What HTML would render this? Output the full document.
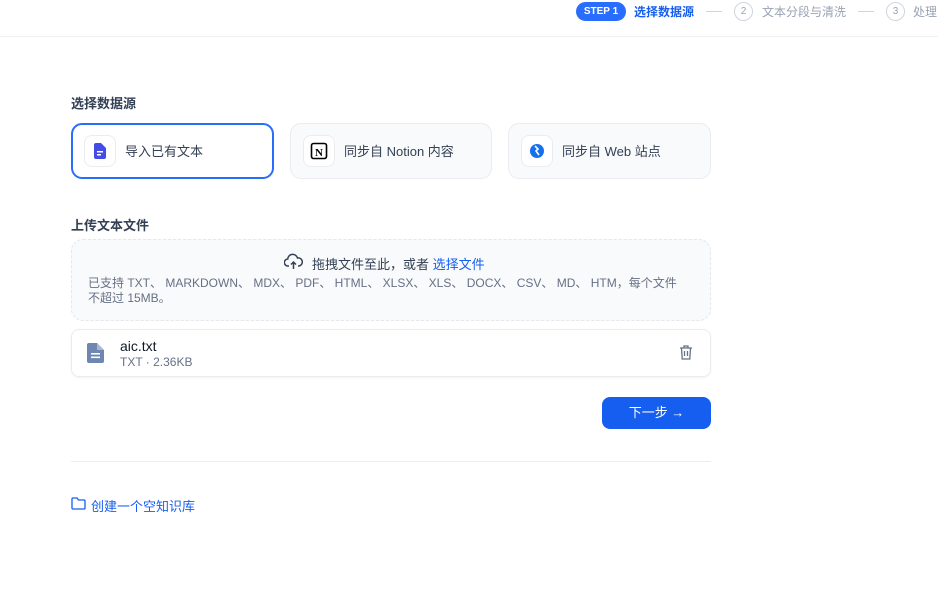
<!DOCTYPE html>
<html><head><meta charset="utf-8"><style>
*{box-sizing:border-box;margin:0;padding:0}
body{width:938px;height:596px;background:#fff;font-family:"Liberation Sans","Noto Sans CJK SC",sans-serif;position:relative;overflow:hidden;color:#354052}
.abs{position:absolute}
.top{left:0;top:0;width:938px;height:37px;border-bottom:1px solid #f0f1f3}
.card{position:absolute;top:123px;height:56px;border:1px solid #eaecf0;border-radius:11px;background:#f9fafb;font-size:13px;color:#344054}
.card .ic{position:absolute;left:12px;top:11px;width:32px;height:32px;border:1px solid #eaecf0;border-radius:8px;background:#fff;display:flex;align-items:center;justify-content:center}
.card span{position:absolute;left:53px;top:17px}
</style></head><body>
<div class="abs top"></div>
<div class="abs" style="left:576px;top:2px;width:50px;height:19px;border-radius:10px;background:#296dff;color:#fff;font-size:10px;font-weight:bold;text-align:center;line-height:19px">STEP 1</div>
<div class="abs" style="left:634px;top:3px;font-size:12px;color:#155eef;font-weight:bold">选择数据源</div>
<div class="abs" style="left:706px;top:11px;width:16px;height:1px;background:#d0d5dd"></div>
<div class="abs" style="left:734px;top:2px;width:19px;height:19px;border:1px solid #d0d5dd;border-radius:50%;font-size:10px;color:#98a2b3;text-align:center;line-height:17px">2</div>
<div class="abs" style="left:762px;top:3px;font-size:12px;color:#98a2b3">文本分段与清洗</div>
<div class="abs" style="left:858px;top:11px;width:16px;height:1px;background:#d0d5dd"></div>
<div class="abs" style="left:886px;top:2px;width:19px;height:19px;border:1px solid #d0d5dd;border-radius:50%;font-size:10px;color:#98a2b3;text-align:center;line-height:17px">3</div>
<div class="abs" style="left:913px;top:3px;font-size:12px;color:#98a2b3">处理</div>

<div class="abs" style="left:71px;top:93px;font-size:13px;font-weight:bold;color:#344054">选择数据源</div>
<div class="card" style="left:71px;width:203px;border:2px solid #296dff;background:#fff"><div class="ic" style="left:11px;top:10px"><svg width="14" height="16" viewBox="0 0 14 16"><path d="M1 2a2 2 0 0 1 2-2h5l5 5v9a2 2 0 0 1-2 2H3a2 2 0 0 1-2-2z" fill="#444ce7"/><rect x="4" y="8" width="6" height="1.5" fill="#fff"/><rect x="4" y="11" width="4" height="1.5" fill="#fff"/></svg></div><span style="left:52px;top:16px">导入已有文本</span></div>
<div class="card" style="left:290px;width:202px"><div class="ic"><svg width="18" height="18" viewBox="0 0 18 18"><rect x="1.5" y="1.5" width="15" height="15" rx="2" fill="#fff" stroke="#000" stroke-width="1.6"/><text x="9" y="14" font-size="11" font-weight="bold" text-anchor="middle" font-family="Liberation Serif">N</text></svg></div><span>同步自 Notion 内容</span></div>
<div class="card" style="left:508px;width:203px"><div class="ic"><svg width="16" height="16" viewBox="0 0 16 16"><circle cx="8" cy="8" r="7" fill="#1570ef"/><path d="M6 3l3 3-2 2 3 4" stroke="#fff" stroke-width="1.6" fill="none"/></svg></div><span>同步自 Web 站点</span></div>

<div class="abs" style="left:71px;top:215px;font-size:13px;font-weight:bold;color:#344054">上传文本文件</div>
<div class="abs" style="left:71px;top:239px;width:640px;height:82px;border:1px dashed #e4e7ec;border-radius:12px;background:#f9fafb"></div>
<svg class="abs" style="left:284px;top:253px" width="19" height="18" viewBox="0 0 19 18"><path d="M5 13H4a3.5 3.5 0 0 1-.3-7A5 5 0 0 1 13.5 5 4 4 0 0 1 15 13h-1M9.5 16V9M7 11.5l2.5-2.5 2.5 2.5" stroke="#344054" stroke-width="1.5" fill="none"/></svg>
<div class="abs" style="left:312px;top:254px;font-size:13px;color:#344054">拖拽文件至此，或者 <span style="color:#155eef">选择文件</span></div>
<div class="abs" style="left:88px;top:276px;width:598px;font-size:12px;line-height:15px;color:#667085">已支持 TXT、 MARKDOWN、 MDX、 PDF、 HTML、 XLSX、 XLS、 DOCX、 CSV、 MD、 HTM，每个文件不超过 15MB。</div>

<div class="abs" style="left:71px;top:329px;width:640px;height:48px;border:1px solid #eaecf0;border-radius:8px;background:#fff;box-shadow:0 1px 2px rgba(16,24,40,.05)"></div>
<svg class="abs" style="left:87px;top:343px" width="18" height="20" viewBox="0 0 18 20"><path d="M0 2a2 2 0 0 1 2-2h8l7 7v11a2 2 0 0 1-2 2H2a2 2 0 0 1-2-2z" fill="#6f86b1"/><path d="M10 0v7h7" fill="#a9b7d2"/><rect x="4" y="10" width="9" height="1.6" fill="#fff"/><rect x="4" y="13.5" width="9" height="1.6" fill="#fff"/></svg>
<div class="abs" style="left:120px;top:338px;font-size:14px;color:#101828">aic.txt</div>
<div class="abs" style="left:120px;top:355px;font-size:12px;color:#667085">TXT · 2.36KB</div>
<svg class="abs" style="left:679px;top:345px" width="14" height="15" viewBox="0 0 14 15"><path d="M1 3h12M5 3V1h4v2M2.5 3l.7 11h7.6l.7-11M5.5 6v5M8.5 6v5" stroke="#667085" stroke-width="1.3" fill="none"/></svg>

<div class="abs" style="left:602px;top:397px;width:109px;height:32px;border-radius:8px;background:#155eef;color:#fff;font-size:13px;text-align:center;line-height:32px">下一步 →</div>
<div class="abs" style="left:71px;top:461px;width:640px;height:1px;background:#eaecf0"></div>
<svg class="abs" style="left:71px;top:497px" width="15" height="13" viewBox="0 0 15 13"><path d="M1 2a1 1 0 0 1 1-1h4l1.5 2H13a1 1 0 0 1 1 1v7a1 1 0 0 1-1 1H2a1 1 0 0 1-1-1z" stroke="#155eef" stroke-width="1.3" fill="none"/></svg>
<div class="abs" style="left:91px;top:496px;font-size:13px;color:#155eef">创建一个空知识库</div>
</body></html>
